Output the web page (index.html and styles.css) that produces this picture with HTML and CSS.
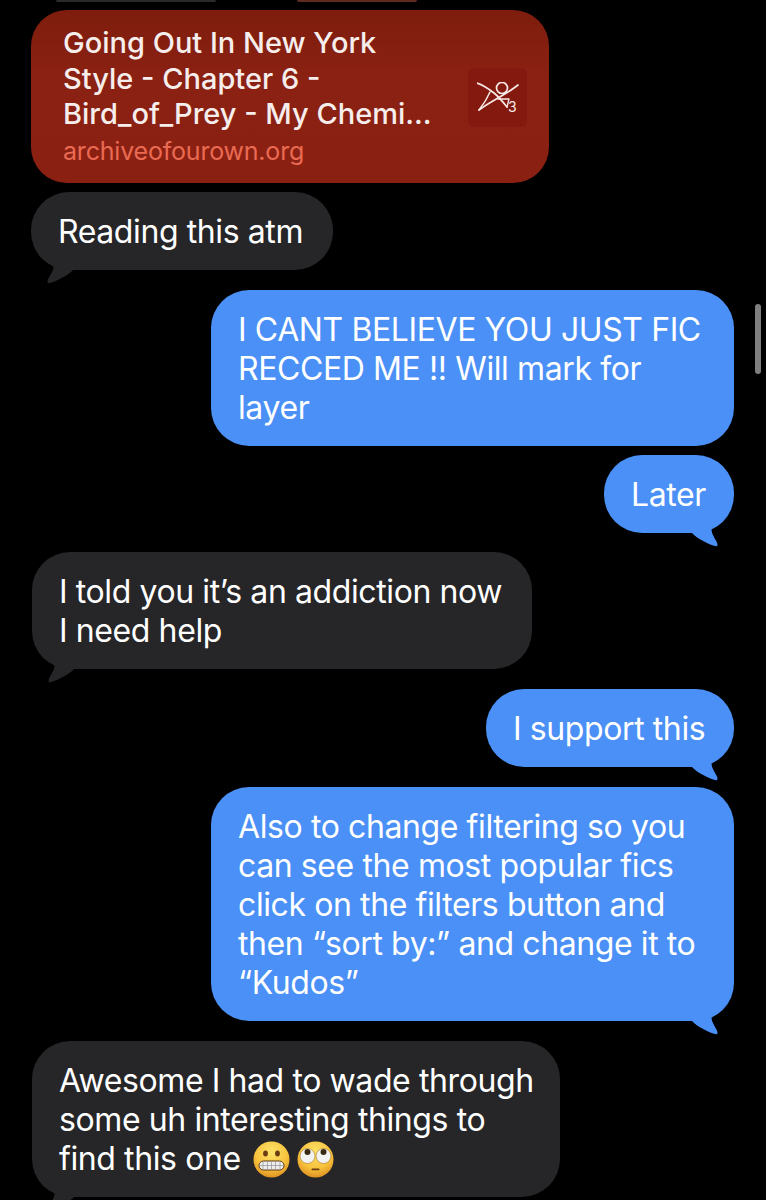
FILE: index.html
```html
<!DOCTYPE html>
<html lang="en">
<head>
  <meta charset="UTF-8" />
  <meta name="viewport" content="width=device-width, initial-scale=1.0" />
  <title>Messages</title>
  <link rel="stylesheet" href="styles.css">
</head>
<body>

  <div class="prev-row">
    <span class="prev prev-dark"></span>
    <span class="prev prev-red"></span>
  </div>

  <div class="thread">

    <div class="link-card">
      <div class="link-text">
        <div class="link-title">Going Out In New York<br>Style - Chapter 6 -<br>Bird_of_Prey - My Chemi...</div>
        <div class="link-site">archiveofourown.org</div>
      </div>
      <div class="link-icon">
        <svg width="42" height="36" viewBox="0 0 42 36" fill="none" stroke="#f7e9e6" stroke-linecap="round" stroke-linejoin="round">
          <path d="M0 1C6 3 12 7 17 11C22 15 26 20 30 25" stroke-width="1.700"/>
          <path d="M41 3C30 12 14 19 2 28" stroke-width="1.700"/>
          <path d="M13 10C10 17 6 23 2 28" stroke-width="1.500"/>
          <circle cx="25" cy="6" r="5.500" stroke-width="1.700"/>
          <path d="M21 17H32L30 25" stroke-width="1.300"/>
          <text x="31" y="30" font-size="14" fill="#f7e9e6" stroke="none">3</text>
        </svg>
      </div>
    </div>

    <div class="bubble in atm">
      Reading this atm
      <svg class="tail tail-in" width="48" height="32" viewBox="0 0 48 32"><path d="M22.500 14C22 20 16 26 16.500 29C16.700 30.500 18 30.500 20 29.800C28 27 36 23 42 17V0H22.500Z"/></svg>
    </div>

    <div class="bubble out wide fic">
      I CANT BELIEVE YOU JUST FIC<br>RECCED ME !! Will mark for<br>layer
    </div>

    <div class="bubble out later">
      Later
      <svg class="tail tail-out" width="48" height="32" viewBox="0 0 48 32"><path d="M22.500 14C22 20 16 26 16.500 29C16.700 30.500 18 30.500 20 29.800C28 27 36 23 42 17V0H22.500Z"/></svg>
    </div>

    <div class="bubble in addiction">
      I told you it’s an addiction now<br>I need help
      <svg class="tail tail-in" width="48" height="32" viewBox="0 0 48 32"><path d="M22.500 14C22 20 16 26 16.500 29C16.700 30.500 18 30.500 20 29.800C28 27 36 23 42 17V0H22.500Z"/></svg>
    </div>

    <div class="bubble out support">
      I support this
      <svg class="tail tail-out" width="48" height="32" viewBox="0 0 48 32"><path d="M22.500 14C22 20 16 26 16.500 29C16.700 30.500 18 30.500 20 29.800C28 27 36 23 42 17V0H22.500Z"/></svg>
    </div>

    <div class="bubble out wide filters">
      Also to change filtering so you<br>can see the most popular fics<br>click on the filters button and<br>then “sort by:” and change it to<br>“Kudos”
      <svg class="tail tail-out" width="48" height="32" viewBox="0 0 48 32"><path d="M22.500 14C22 20 16 26 16.500 29C16.700 30.500 18 30.500 20 29.800C28 27 36 23 42 17V0H22.500Z"/></svg>
    </div>

    <div class="bubble in awesome">
      Awesome I had to wade through<br>some uh interesting things to<br>find this one
      <svg class="emoji first" width="37" height="37" viewBox="0 0 37 37">
        <defs>
          <radialGradient id="face" cx="50%" cy="30%" r="75%">
            <stop offset="0" stop-color="#fde36a"/>
            <stop offset="0.6" stop-color="#f8c23c"/>
            <stop offset="1" stop-color="#d98a1e"/>
          </radialGradient>
        </defs>
        <circle cx="18.500" cy="18.500" r="18" fill="url(#face)"/>
        <ellipse cx="12.500" cy="12.500" rx="2.400" ry="3" fill="#6b3d12"/>
        <ellipse cx="24.500" cy="12.500" rx="2.400" ry="3" fill="#6b3d12"/>
        <rect x="6" y="20" width="25" height="9" rx="4.500" fill="#eeeeee" stroke="#5c3512" stroke-width="1"/>
        <path d="M6 24.500H31M10 20.500V28.500M14.500 20V29M18.500 20V29M22.500 20V29M27 20.500V28.500" stroke="#9a9a9a" stroke-width="0.800"/>
      </svg>
      <svg class="emoji" width="37" height="37" viewBox="0 0 37 37">
        <circle cx="18.500" cy="18.500" r="18" fill="url(#face)"/>
        <circle cx="10.500" cy="15" r="7.500" fill="#f2f2f2" stroke="#a9761d" stroke-width="0.600"/>
        <circle cx="26.500" cy="15" r="7.500" fill="#f2f2f2" stroke="#a9761d" stroke-width="0.600"/>
        <circle cx="10.500" cy="11" r="3" fill="#3b2a14"/>
        <circle cx="26.500" cy="11" r="3" fill="#3b2a14"/>
        <rect x="14.500" y="27.500" width="8" height="1.800" rx="0.900" fill="#6b3d12"/>
      </svg>
      <svg class="tail tail-in" width="48" height="32" viewBox="0 0 48 32"><path d="M22.500 14C22 20 16 26 16.500 29C16.700 30.500 18 30.500 20 29.800C28 27 36 23 42 17V0H22.500Z"/></svg>
    </div>

  </div>

  <div class="scroll-thumb"></div>

</body>
</html>
```

FILE: styles.css
```css
html, body {
  height: 1200px;
}

body {
  margin: 0;
  background-color: #000;
  font-family: Inter, "Noto Sans", sans-serif;
  color: #fff;
  overflow: hidden;
  position: relative;
}

.prev-row {
  display: flex;
  height: 2px;
  padding-left: 56px;
  gap: 81px;
}

.prev {
  display: block;
  height: 2px;
  border-radius: 0 0 20px 20px;
}

.prev-dark {
  width: 160px;
  background-color: #2a2a2d;
}

.prev-red {
  width: 120px;
  background-color: #5f2a20;
}

.thread {
  display: flex;
  flex-direction: column;
  padding: 8px 32px 0 32px;
}

/* link preview */
.link-card {
  box-sizing: border-box;
  width: 518px;
  height: 173px;
  margin-left: -1px;
  padding: 15px 22px 0 32px;
  background: linear-gradient(180deg, #7e1d0d, #8b2113 40%, #8a2012);
  border-radius: 36px;
  display: flex;
  justify-content: space-between;
  align-items: flex-start;
}

.link-title {
  font-size: 29px;
  font-weight: 500;
  line-height: 35.500px;
  color: #f6eeec;
  white-space: nowrap;
}

.link-site {
  font-size: 25px;
  line-height: 36px;
  margin-top: 1px;
  letter-spacing: -0.200px;
  color: #ea6a52;
}

.link-icon {
  width: 59px;
  height: 59px;
  margin-top: 43px;
  background-color: #84190f;
  border-radius: 6px;
  display: flex;
  align-items: flex-start;
  justify-content: center;
  padding-top: 14px;
  box-sizing: border-box;
}

/* bubbles */
.bubble {
  box-sizing: border-box;
  position: relative;
  font-size: 32px;
  line-height: 39px;
  letter-spacing: -0.400px;
  padding: 20px 27px 19px 27px;
  border-radius: 38px;
  white-space: nowrap;
}

.bubble.in {
  align-self: flex-start;
  background-color: #262628;
}

.bubble.out {
  align-self: flex-end;
  background-color: #4a90f6;
}

.tail {
  position: absolute;
  bottom: -15px;
  z-index: -1;
}

.tail-in {
  left: 0;
  fill: #262628;
}

.tail-out {
  right: 0;
  fill: #4a90f6;
  transform: scaleX(-1);
}

.wide {
  width: 523px;
}

.atm {
  width: 302px;
  height: 78px;
  margin-top: 9px;
  margin-left: -1px;
}

.fic {
  height: 156px;
  margin-top: 20px;
}

.later {
  width: 130px;
  height: 78px;
  margin-top: 9px;
}

.addiction {
  width: 500px;
  height: 117px;
  margin-top: 19px;
}

.support {
  width: 248px;
  height: 78px;
  margin-top: 20px;
}

.filters {
  height: 234px;
  margin-top: 20px;
}

.awesome {
  width: 528px;
  height: 156px;
  margin-top: 20px;
}

.emoji {
  vertical-align: -8px;
}

.emoji.first {
  margin-left: 4px;
  margin-right: -2px;
}

.scroll-thumb {
  position: absolute;
  left: 755px;
  top: 304px;
  width: 6px;
  height: 70px;
  border-radius: 3px;
  background-color: #7f7f7f;
}
```
